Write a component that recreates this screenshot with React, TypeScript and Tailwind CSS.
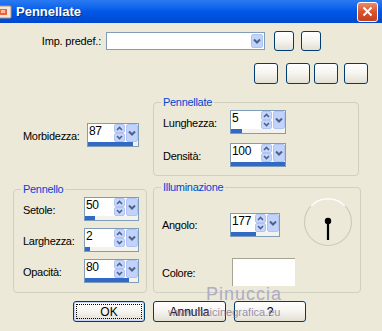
import React from 'react';

const UpDown = () => (
  <svg width="11" height="18" viewBox="0 0 11 18" className="block">
    <rect x="0.5" y="0.5" width="10" height="8" rx="1.5" fill="#c6d5fb" stroke="#b2c4f2" />
    <path d="M3 6 L5.5 3.5 L8 6" stroke="#4d6185" strokeWidth="1.6" fill="none" />
    <rect x="0.5" y="9.5" width="10" height="8" rx="1.5" fill="#c6d5fb" stroke="#b2c4f2" />
    <path d="M3 12 L5.5 14.5 L8 12" stroke="#4d6185" strokeWidth="1.6" fill="none" />
  </svg>
);

const DropArrow = ({ h = 18 }: { h?: number }) => (
  <svg width="12" height={h} viewBox={`0 0 12 ${h}`} className="block">
    <rect x="0.5" y="0.5" width="11" height={h - 1} rx="1.5" fill="#c1d3fb" stroke="#b0c4f4" />
    <path d={`M3 ${h / 2 - 1.5} L6 ${h / 2 + 1.5} L9 ${h / 2 - 1.5}`} stroke="#4d6185" strokeWidth="2" fill="none" />
  </svg>
);

function Spin({ value, className, bar }: { value: string; className: string; bar: number }) {
  return (
    <div className={`flex h-[24px] flex-col border border-[#7f9db9] bg-white ${className}`}>
      <div className="flex h-[18px]">
        <div className="flex-1 pl-[1px] text-[12px] leading-[15px] text-black">{value}</div>
        <UpDown />
        <div className="ml-[1px]">
          <DropArrow />
        </div>
      </div>
      <div className="h-[4px] bg-[#f3f2ec]">
        <div className="h-[4px] bg-[#316ac5]" style={{ width: bar }} />
      </div>
    </div>
  );
}

function XpButton({ className, children }: { className: string; children?: React.ReactNode }) {
  return (
    <div
      className={`flex items-center justify-center rounded-[3px] border border-[#003c74] bg-gradient-to-b from-[#ffffff] via-[#f5f4ef] to-[#e2dfd4] text-[12px] text-black ${className}`}
    >
      {children}
    </div>
  );
}

function Group({ title, className, children }: { title: string; className: string; children: React.ReactNode }) {
  return (
    <fieldset className={`rounded-[4px] border border-[#d0d0bf] px-[7px] ${className}`}>
      <legend className="px-[2px] text-[11px] leading-[13px] text-[#0046d5]">{title}</legend>
      {children}
    </fieldset>
  );
}

export default function App() {
  return (
    <div className="relative h-[331px] w-[382px] overflow-hidden bg-[#ece9d8] font-['Liberation_Sans',Arial,sans-serif] text-[11px] text-black">
      {/* title bar */}
      <div className="flex h-[23px] items-center bg-gradient-to-b from-[#2a7bf2] via-[#0058e6] to-[#0048cf]">
        <svg width="14" height="14" viewBox="0 0 14 14" className="-ml-[2px] block">
          <rect x="0" y="1" width="13" height="12" rx="1" fill="#f3e6dc" stroke="#b8907a" />
          <rect x="2" y="4" width="7" height="6" fill="#e8663a" />
          <rect x="3" y="5" width="4" height="3" fill="#f8c0a0" />
        </svg>
        <div className="ml-[4px] text-[13px] font-bold text-white [text-shadow:1px_1px_0_#0a2a80]">Pennellate</div>
        <div className="ml-auto mr-[4px] flex h-[20px] w-[21px] items-center justify-center rounded-[3px] border border-white bg-gradient-to-b from-[#e98a6a] via-[#d9532e] to-[#c4401c]">
          <svg width="11" height="11" viewBox="0 0 11 11">
            <path d="M1.5 1.5 L9.5 9.5 M9.5 1.5 L1.5 9.5" stroke="white" strokeWidth="2" />
          </svg>
        </div>
      </div>

      {/* preset row */}
      <div className="mt-[8px] flex items-center">
        <div className="w-[101px] text-right tracking-[-0.2px]">Imp. predef.:</div>
        <div className="ml-[5px] flex h-[18px] w-[159px] items-center justify-end border border-[#7f9db9] bg-white pr-[1px]">
          <DropArrow h={14} />
        </div>
        <XpButton className="ml-[9px] h-[20px] w-[20px]" />
        <XpButton className="ml-[7px] h-[20px] w-[20px]" />
      </div>

      {/* tool buttons */}
      <div className="mt-[12px] flex pl-[254px]">
        <XpButton className="h-[21px] w-[24px]" />
        <XpButton className="ml-[8px] h-[21px] w-[24px]" />
        <XpButton className="ml-[4px] h-[21px] w-[24px]" />
        <XpButton className="ml-[6px] h-[21px] w-[24px]" />
      </div>

      {/* main area */}
      <div className="mt-[12px] flex gap-[6px] pl-[13px] tracking-[-0.3px]">
        <div className="flex w-[134px] flex-col">
          <div className="mt-[27px] flex items-center pl-[10px]">
            <div className="w-[64px] pt-[2px]">Morbidezza:</div>
            <Spin value="87" className="w-[52px]" bar={45} />
          </div>
          <Group title="Pennello" className="mt-[36px] h-[110px]">
            <div className="ml-[2px] flex flex-col gap-[7px] pt-[1px]">
              <div className="flex items-center">
                <div className="w-[61px] pt-[2px]">Setole:</div>
                <Spin value="50" className="w-[55px]" bar={10} />
              </div>
              <div className="flex items-center">
                <div className="w-[61px] pt-[2px]">Larghezza:</div>
                <Spin value="2" className="w-[55px]" bar={5} />
              </div>
              <div className="flex items-center">
                <div className="w-[61px] pt-[2px]">Opacità:</div>
                <Spin value="80" className="w-[55px]" bar={44} />
              </div>
            </div>
          </Group>
        </div>

        <div className="flex w-[206px] flex-col">
          <Group title="Pennellate" className="h-[80px]">
            <div className="ml-[2px] flex flex-col gap-[9px] pt-[1px]">
              <div className="flex items-center">
                <div className="w-[67px] pt-[2px]">Lunghezza:</div>
                <Spin value="5" className="w-[56px]" bar={11} />
              </div>
              <div className="flex items-center">
                <div className="w-[67px] pt-[2px]">Densità:</div>
                <Spin value="100" className="w-[56px]" bar={54} />
              </div>
            </div>
          </Group>
          <Group title="Illuminazione" className="mt-[5px] h-[112px]">
            <div className="ml-[1px] flex flex-col pt-[4px]">
              <div className="flex items-start">
                <div className="mt-[19px] w-[68px]">Angolo:</div>
                <div className="mt-[15px]">
                  <Spin value="177" className="w-[50px]" bar={25} />
                </div>
                <svg width="50" height="50" viewBox="0 0 50 50" className="ml-[23px] -mt-[1px] block">
                  <circle cx="25" cy="25" r="23.5" fill="none" stroke="#cfcbbb" strokeWidth="1.2" />
                  <path d="M8 9 A23.5 23.5 0 0 1 42 9" fill="none" stroke="#ffffff" strokeWidth="1.4" />
                  <line x1="25" y1="24" x2="25" y2="43" stroke="#000" strokeWidth="2.2" />
                  <circle cx="25" cy="24" r="3.2" fill="#000" />
                </svg>
              </div>
              <div className="mt-[11px] flex items-center">
                <div className="w-[70px] pt-[2px]">Colore:</div>
                <div className="h-[28px] w-[63px] border-l border-t border-[#a7a391] bg-white" />
              </div>
            </div>
          </Group>
        </div>
      </div>

      {/* dialog buttons */}
      <div className="mt-[8px] flex gap-[8px] pl-[73px]">
        <div className="flex h-[21px] w-[72px] rounded-[3px] border border-[#003c74] bg-gradient-to-b from-[#ffffff] via-[#f5f4ef] to-[#e2dfd4] p-[2px] shadow-[inset_0_0_0_1px_#c6d6f6]">
          <div className="flex flex-1 items-center justify-center border border-dotted border-black text-[12px]">OK</div>
        </div>
        <XpButton className="h-[21px] w-[73px]">Annulla</XpButton>
        <XpButton className="h-[21px] w-[72px]">?</XpButton>
      </div>

      {/* watermark */}
      <div className="pointer-events-none absolute left-[206px] top-[281px] text-[18px] tracking-[1px] text-[#a9a6c6] opacity-90">
        Pinuccia
      </div>
      <div className="pointer-events-none absolute left-[168px] top-[304px] text-[11px] text-[#7d7a9a] opacity-80">
        www.maicinegrafica.eu
      </div>
    </div>
  );
}
